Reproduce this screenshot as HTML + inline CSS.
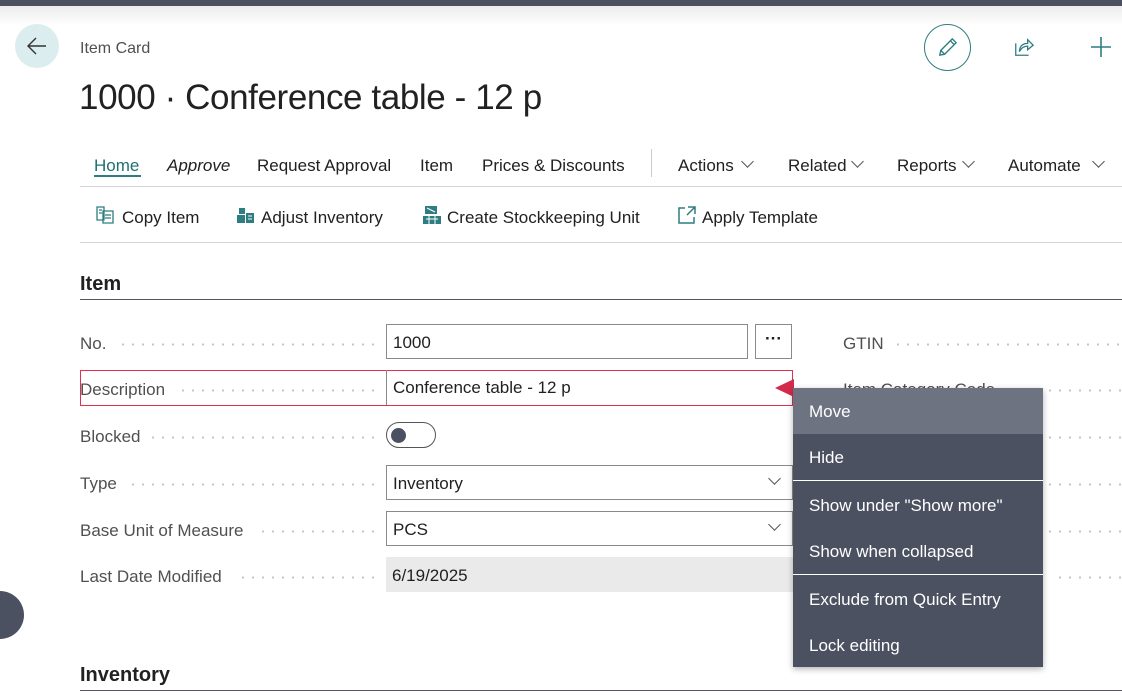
<!DOCTYPE html>
<html><head><meta charset="utf-8"><style>
*{margin:0;padding:0;box-sizing:border-box}
body{width:1122px;height:697px;overflow:hidden;background:#fff;font-family:"Liberation Sans",sans-serif;color:#212121;position:relative}
.a{position:absolute;white-space:nowrap}
.lbl{position:absolute;left:80px;font-size:17px;color:#505050;height:20px;line-height:20px}
.dots{position:absolute;height:3px;background-image:radial-gradient(circle,#c4c4c4 1px,transparent 1.3px);background-size:10px 3px}
.inp{position:absolute;border:1px solid #8a8a8a;font-size:17px;padding-left:6px;line-height:35px;height:35px}
.mi{position:absolute;left:0;width:250px;height:46px;line-height:48px;padding-left:16px;color:#fff;font-size:17px}
.tab{position:absolute;top:156px;font-size:17px;color:#212121}
.act{position:absolute;top:208px;font-size:17px;color:#212121}
.chev{position:absolute;width:9px;height:9px;border-right:1.3px solid #555;border-bottom:1.3px solid #555;transform:rotate(45deg)}
</style></head><body>
<div class="a" style="left:0;top:0;width:1122px;height:6px;background:#4b5160"></div>
<div class="a" style="left:0;top:6px;width:1122px;height:20px;background:linear-gradient(#ececec,#fff)"></div>
<div class="a" style="left:15px;top:24px;width:44px;height:44px;border-radius:50%;background:#dcedf0"></div>
<svg class="a" style="left:25px;top:34px" width="24" height="24" viewBox="0 0 24 24"><path d="M21 12H3M11 4l-8 8 8 8" fill="none" stroke="#333" stroke-width="1.4"/></svg>
<div class="a" style="left:80px;top:40px;font-size:16px;color:#505050">Item Card</div>
<div class="a" style="left:79px;top:78px;font-size:35px;color:#212121;letter-spacing:-0.4px">1000 · Conference table - 12 p</div>
<div class="a" style="left:924px;top:24px;width:47px;height:47px;border-radius:50%;border:1.3px solid #2e7d80"></div>
<svg class="a" style="left:936px;top:36px" width="23" height="23" viewBox="0 0 24 24"><path d="M4 20l1-5L17 3l4 4L9 19zM15 5l4 4M5 15l4 4" fill="none" stroke="#2e7d80" stroke-width="1.4"/></svg>
<svg class="a" style="left:1013px;top:36px" width="22" height="22" viewBox="0 0 24 24"><path d="M3 8v13h14M7 17c0-6 4-9 9-9V4l6 6-6 5v-4c-4 0-7 2-9 6z" fill="none" stroke="#2e7d80" stroke-width="1.4"/></svg>
<svg class="a" style="left:1090px;top:36px" width="22" height="22" viewBox="0 0 22 22"><path d="M11 1v20M1 11h20" stroke="#2e7d80" stroke-width="1.6"/></svg>

<div class="tab" style="left:94px;color:#1f6f73">Home</div>
<div class="a" style="left:94px;top:175px;width:47px;height:2px;background:#2e7d80"></div>
<div class="tab" style="left:167px;font-style:italic">Approve</div>
<div class="tab" style="left:257px">Request Approval</div>
<div class="tab" style="left:420px">Item</div>
<div class="tab" style="left:482px">Prices &amp; Discounts</div>
<div class="a" style="left:651px;top:149px;width:1px;height:28px;background:#ccc"></div>
<div class="tab" style="left:678px">Actions</div><div class="chev" style="left:743px;top:157px"></div>
<div class="tab" style="left:788px">Related</div><div class="chev" style="left:853px;top:157px"></div>
<div class="tab" style="left:897px">Reports</div><div class="chev" style="left:964px;top:157px"></div>
<div class="tab" style="left:1008px">Automate</div><div class="chev" style="left:1094px;top:157px"></div>
<div class="a" style="left:80px;top:186px;width:1042px;height:1px;background:#d5d5d5"></div>

<svg class="a" style="left:96px;top:206px" width="20" height="18" viewBox="0 0 20 18"><path d="M1 1h7v13H1zM7 5h10v12H7zM9 9h6M9 12h6M3 4h3M3 7h3" fill="none" stroke="#2e7d80" stroke-width="1.3"/></svg>
<div class="act" style="left:122px">Copy Item</div>
<svg class="a" style="left:236px;top:206px" width="20" height="18" viewBox="0 0 20 18"><path d="M3 2h6v6H3zM1 9h8v8H1zM10 7h8v10h-8z" fill="#2e7d80"/><path d="M12 10h4M12 13h4" stroke="#fff"/></svg>
<div class="act" style="left:261px">Adjust Inventory</div>
<svg class="a" style="left:422px;top:205px" width="20" height="20" viewBox="0 0 20 20"><path d="M3 1h12v8H3zM1 11h18v8H1z" fill="#2e7d80"/><path d="M5 3l8 4M4 14h12M7 11v8M13 11v8" stroke="#fff"/></svg>
<div class="act" style="left:447px">Create Stockkeeping Unit</div>
<svg class="a" style="left:677px;top:205px" width="20" height="20" viewBox="0 0 20 20"><path d="M8 3H2v15h15v-6M11 2h7v7M18 2l-8 8" fill="none" stroke="#2e7d80" stroke-width="1.5"/></svg>
<div class="act" style="left:702px">Apply Template</div>
<div class="a" style="left:80px;top:242px;width:1042px;height:1px;background:#d5d5d5"></div>

<div class="a" style="left:80px;top:273px;font-size:20px;font-weight:bold;color:#212121">Item</div>
<div class="a" style="left:80px;top:299px;width:1042px;height:1px;background:#505560"></div>

<div class="lbl" style="top:334px">No.</div><div class="dots" style="left:118px;width:260px;top:343px"></div>
<div class="inp" style="left:386px;top:324px;width:362px">1000</div>
<div class="inp" style="left:755px;top:324px;width:37px;text-align:center;padding:0;line-height:28px;font-weight:bold">···</div>
<div class="lbl" style="left:843px;top:334px">GTIN</div><div class="dots" style="left:893px;width:229px;top:343px"></div>
<div class="lbl" style="left:843px;top:380px">Item Category Code</div><div class="dots" style="left:1045px;width:77px;top:389px"></div>

<div class="a" style="left:80px;top:370px;width:713px;height:36px;border:1.3px solid #e0304f"></div>
<div class="lbl" style="top:380px">Description</div><div class="dots" style="left:178px;width:200px;top:389px"></div>
<div class="inp" style="left:386px;top:370px;width:407px;border-color:#888;border-right:none;border-top:none;border-bottom:none;color:#212121">Conference table - 12 p</div>
<svg class="a" style="left:775px;top:379px" width="19" height="18"><path d="M0 9L19 0v18z" fill="#d42a4b"/></svg>

<div class="lbl" style="top:427px">Blocked</div><div class="dots" style="left:148px;width:230px;top:436px"></div>
<div class="a" style="left:386px;top:422px;width:50px;height:26px;border:1.3px solid #555;border-radius:13px"></div>
<div class="a" style="left:391px;top:428px;width:15px;height:15px;border-radius:50%;background:#4b5160"></div>
<div class="dots" style="left:1045px;width:77px;top:436px"></div>

<div class="lbl" style="top:474px">Type</div><div class="dots" style="left:128px;width:250px;top:483px"></div>
<div class="inp" style="left:386px;top:465px;width:407px">Inventory</div><div class="chev" style="left:770px;top:474px"></div>
<div class="dots" style="left:1045px;width:77px;top:483px"></div>

<div class="lbl" style="top:521px">Base Unit of Measure</div><div class="dots" style="left:258px;width:120px;top:530px"></div>
<div class="inp" style="left:386px;top:511px;width:407px">PCS</div><div class="chev" style="left:770px;top:520px"></div>
<div class="dots" style="left:1045px;width:77px;top:530px"></div>

<div class="lbl" style="top:567px">Last Date Modified</div><div class="dots" style="left:238px;width:140px;top:576px"></div>
<div class="a" style="left:386px;top:557px;width:407px;height:35px;background:#eaeaea;font-size:17px;line-height:37px;padding-left:6px">6/19/2025</div>
<div class="dots" style="left:1055px;width:67px;top:576px"></div>

<div class="a" style="left:-24px;top:591px;width:48px;height:48px;border-radius:50%;background:#4b5160"></div>

<div class="a" style="left:80px;top:664px;font-size:20px;font-weight:bold">Inventory</div>
<div class="a" style="left:80px;top:690px;width:1042px;height:1px;background:#505560"></div>

<div class="a" style="left:793px;top:388px;width:250px;height:279px;background:#4b5160;box-shadow:0 2px 6px rgba(0,0,0,.3)">
<div class="mi" style="top:0;background:#6d7380">Move</div>
<div class="mi" style="top:46px">Hide</div>
<div class="a" style="left:0;top:92px;width:250px;height:1px;background:#fff"></div>
<div class="mi" style="top:94px">Show under "Show more"</div>
<div class="mi" style="top:140px">Show when collapsed</div>
<div class="a" style="left:0;top:186px;width:250px;height:1px;background:#fff"></div>
<div class="mi" style="top:188px">Exclude from Quick Entry</div>
<div class="mi" style="top:234px">Lock editing</div>
</div>
</body></html>
